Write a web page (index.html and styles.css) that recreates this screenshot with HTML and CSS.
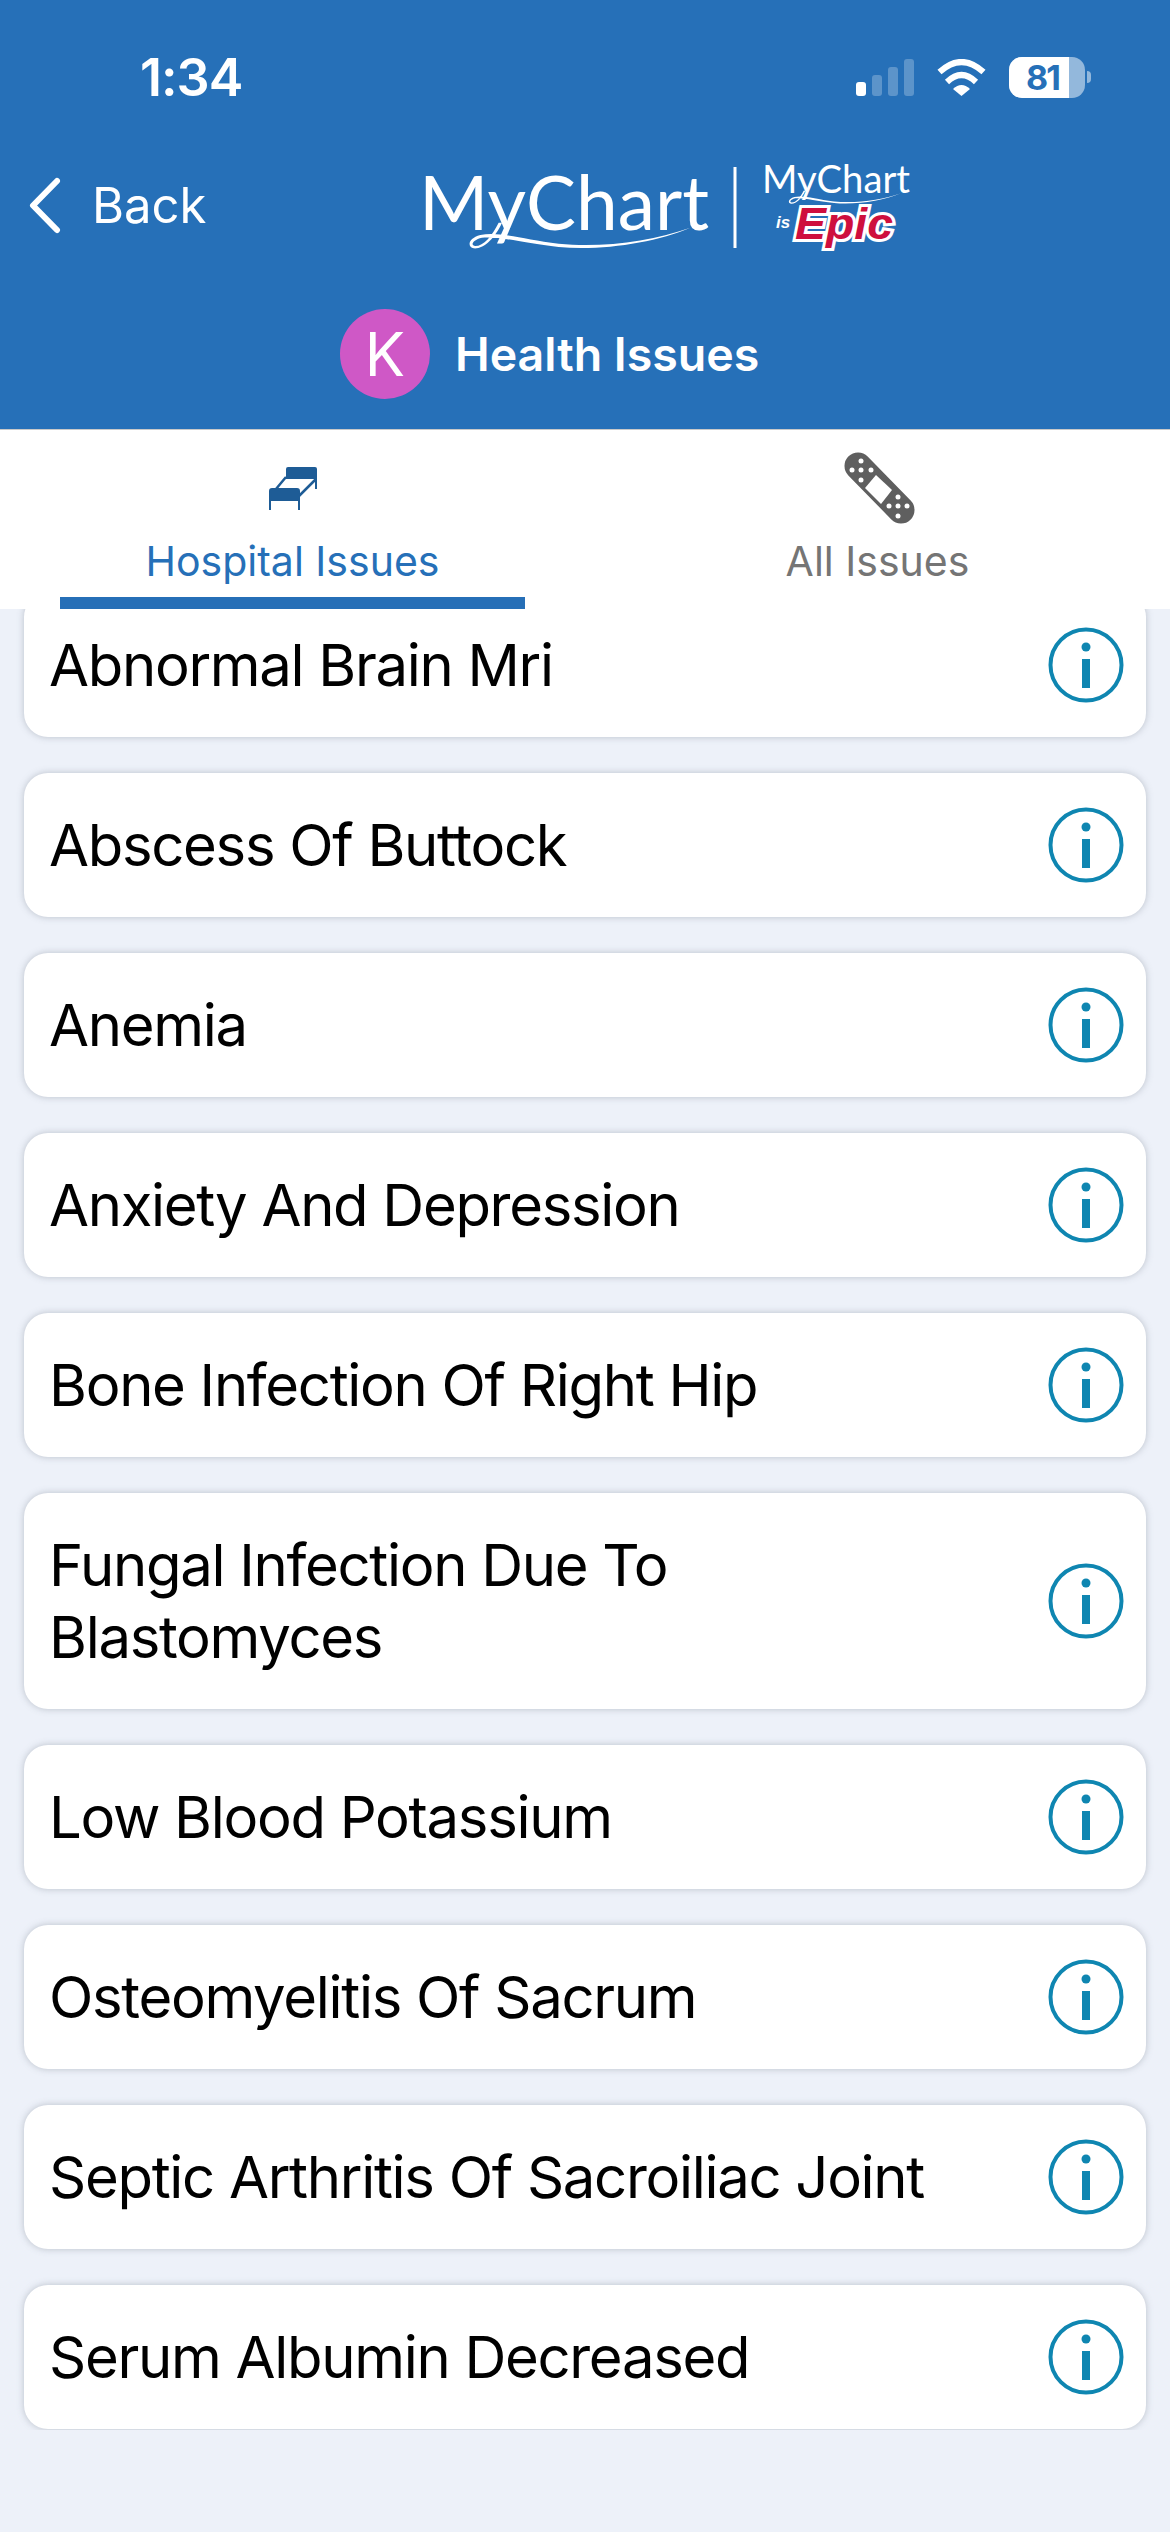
FILE: index.html
```html
<!DOCTYPE html>
<html lang="en">
<head>
    <meta charset="UTF-8">
    <meta name="viewport" content="width=device-width, initial-scale=1.0">
    <title>Health Issues</title>
    <link rel="stylesheet" href="styles.css">
</head>
<body>
    <!-- Header -->
    <header class="header">
        <div class="status-bar">
            <span class="status-time">1:34</span>
            <div class="status-icons">
                <svg width="58" height="37" viewBox="0 0 58 37">
                    <rect x="0" y="23" width="10" height="14" rx="3" fill="#fff"/>
                    <rect x="16" y="16" width="10" height="21" rx="3" fill="#fff" fill-opacity=".25"/>
                    <rect x="32" y="8" width="10" height="29" rx="3" fill="#fff" fill-opacity=".25"/>
                    <rect x="48" y="0" width="10" height="37" rx="3" fill="#fff" fill-opacity=".25"/>
                </svg>
                <svg width="51" height="37" viewBox="0 0 51 37">
                    <path d="M3.5 13Q25.5 -7 47.5 13" fill="none" stroke="#fff" stroke-width="6"/>
                    <path d="M11 23Q25.5 9 40 23" fill="none" stroke="#fff" stroke-width="6"/>
                    <path d="M17 30Q25.5 22 34 30L25.5 37Z" fill="#fff"/>
                </svg>
                <div class="battery">
                    <div class="battery-body"><div class="battery-fill">81</div></div>
                    <div class="battery-nub"></div>
                </div>
            </div>
        </div>
        <div class="nav-bar">
            <svg class="back-icon" width="33" height="57" viewBox="0 0 33 57">
                <path d="M29 4L5 28.5L29 53" fill="none" stroke="#fff" stroke-width="6" stroke-linecap="round" stroke-linejoin="round"/>
            </svg>
            <span class="back-label">Back</span>
            <svg class="logo" width="510" height="100" viewBox="-10 -5 510 100">
                <text class="logo-main" x="-3" y="69" textLength="290" lengthAdjust="spacingAndGlyphs">MyChart</text>
                <g transform="translate(-20 -20) scale(.3333)">
                    <path fill="#fff" d="M300 245C280 290 245 325 215 322C195 318 198 292 235 282C290 270 360 295 470 308C600 322 750 300 865 260C760 305 600 330 470 318C360 305 290 285 240 290C210 297 205 314 220 315C245 315 270 285 290 245Z"/>
                </g>
                <rect x="311.500" y="6" width="3" height="81" fill="#fff"/>
                <text class="logo-small" x="340" y="32" textLength="148" lengthAdjust="spacingAndGlyphs">MyChart</text>
                <g transform="translate(-20 -20) scale(.3333) translate(1058 25) scale(.507)">
                    <path fill="#fff" d="M300 245C280 290 245 325 215 322C195 318 198 292 235 282C290 270 360 295 470 308C600 322 750 300 865 260C760 305 600 330 470 318C360 305 290 285 240 290C210 297 205 314 220 315C245 315 270 285 290 245Z"/>
                </g>
                <text class="logo-is" x="354" y="67">is</text>
                <text class="logo-epic" x="373" y="78" textLength="98" lengthAdjust="spacingAndGlyphs">Epic</text>
            </svg>
        </div>
        <div class="title-row">
            <div class="avatar">K</div>
            <h1 class="title">Health Issues</h1>
        </div>
    </header>

    <!-- Onglets -->
    <nav class="tabs">
        <div class="tab tab-active">
            <div class="tab-icon">
                <svg width="48" height="43" viewBox="0 0 48 43">
                    <path fill="#1e5c96" d="M19 0H46Q48 0 48 2V22H46V12H17V2Q17 0 19 0Z"/>
                    <path fill="none" stroke="#1e5c96" stroke-width="2.500" d="M7 22L17 10M47 12L30 29"/>
                    <path fill="#1e5c96" d="M3 21H28Q31 21 31 24V43H29V34H2V43H0V24Q0 21 3 21Z"/>
                </svg>
            </div>
            <span class="tab-label">Hospital Issues</span>
        </div>
        <div class="tab">
            <div class="tab-icon tab-icon-right">
                <svg width="71" height="72" viewBox="0 0 71 72">
                    <path d="M14 14L57 58" stroke="#5f5f5f" stroke-width="27" stroke-linecap="round"/>
                    <path fill="#fff" d="M32 23L48 38L37 52L21 36Z"/>
                    <g fill="#fff">
                        <circle cx="17" cy="9" r="2.500"/><circle cx="8" cy="18" r="2.500"/><circle cx="17" cy="18" r="2.500"/><circle cx="27" cy="18" r="2.500"/><circle cx="17" cy="28" r="2.500"/>
                        <circle cx="54" cy="45" r="2.500"/><circle cx="45" cy="54" r="2.500"/><circle cx="54" cy="54" r="2.500"/><circle cx="63" cy="54" r="2.500"/><circle cx="54" cy="64" r="2.500"/>
                    </g>
                </svg>
            </div>
            <span class="tab-label">All Issues</span>
        </div>
    </nav>

    <!-- Liste -->
    <main class="list-area">
        <ul class="issue-list" id="issue-list"></ul>
    </main>

    <script>
        let issues = [
            'Abnormal Brain Mri',
            'Abscess Of Buttock',
            'Anemia',
            'Anxiety And Depression',
            'Bone Infection Of Right Hip',
            'Fungal Infection Due To Blastomyces',
            'Low Blood Potassium',
            'Osteomyelitis Of Sacrum',
            'Septic Arthritis Of Sacroiliac Joint',
            'Serum Albumin Decreased'
        ];
        let issueList = document.getElementById('issue-list');
        for (let i = 0; i < issues.length; i++) {
            let li = document.createElement('li');
            li.className = 'issue-card';
            li.innerHTML = '<span class="issue-name">' + issues[i] + '</span>' +
                '<svg width="76" height="76" viewBox="0 0 76 76">' +
                '<circle cx="38" cy="38" r="35.500" fill="none" stroke="#0f86b1" stroke-width="4"/>' +
                '<circle cx="38" cy="20" r="4.500" fill="#0f86b1"/>' +
                '<rect x="34" y="32" width="8" height="29" fill="#0f86b1"/>' +
                '</svg>';
            issueList.appendChild(li);
        }
    </script>
</body>
</html>
```

FILE: styles.css
```css
* {
    box-sizing: border-box;
}

html, body {
    margin: 0;
    padding: 0;
}

body {
    width: 1170px;
    height: 2532px;
    overflow: hidden;
    background-color: #edf1f9;
    font-family: Inter, "Liberation Sans", sans-serif;
    color: #000;
}

/* Header */
.header {
    height: 430px;
    background-color: #2670b8;
    border-bottom: 1px solid #c9c9c9;
    color: #fff;
}

.status-bar {
    height: 154px;
    padding: 0 79px 0 140px;
    display: flex;
    align-items: center;
    justify-content: space-between;
}

.status-time {
    font-size: 52px;
    font-weight: 600;
    letter-spacing: -1px;
}

.status-icons {
    display: flex;
    align-items: center;
    gap: 22px;
}

.battery {
    display: flex;
    align-items: center;
    gap: 2px;
}

.battery-body {
    width: 76px;
    height: 41px;
    border-radius: 13px;
    overflow: hidden;
    background-color: rgba(255, 255, 255, 0.5);
}

.battery-fill {
    width: 60px;
    height: 41px;
    padding-left: 17px;
    background-color: #fff;
    color: #2670b8;
    font-size: 34px;
    font-weight: 700;
    line-height: 41px;
    letter-spacing: -2px;
}

.battery-nub {
    width: 4px;
    height: 12px;
    border-radius: 0 6px 6px 0;
    background-color: rgba(255, 255, 255, 0.5);
}

.nav-bar {
    height: 102px;
    padding-left: 28px;
    display: flex;
    align-items: center;
}

.back-label {
    margin-left: 31px;
    width: 111px;
    font-size: 49px;
    font-weight: 400;
}

.logo {
    margin-left: 209px;
    margin-top: 2px;
}

.logo-main,
.logo-small {
    font-family: Lato, sans-serif;
    font-weight: 400;
    fill: #fff;
}

.logo-main {
    font-size: 76px;
}

.logo-small {
    font-size: 38px;
}

.logo-is {
    font-family: "Liberation Sans", sans-serif;
    font-size: 17px;
    font-style: italic;
    font-weight: 700;
    fill: #fff;
}

.logo-epic {
    font-family: "Liberation Sans", sans-serif;
    font-size: 45px;
    font-style: italic;
    font-weight: 700;
    fill: #ce0f3e;
    stroke: #fff;
    stroke-width: 6px;
    paint-order: stroke;
}

.title-row {
    padding: 53px 0 0 340px;
    display: flex;
    align-items: center;
    gap: 25px;
}

.avatar {
    width: 90px;
    height: 90px;
    border-radius: 50%;
    background-color: #cf58c6;
    font-size: 60px;
    font-weight: 400;
    line-height: 90px;
    text-align: center;
}

.title {
    margin: 0;
    font-size: 46.5px;
    font-weight: 600;
}

/* Onglets */
.tabs {
    height: 179px;
    padding: 0 60px;
    background-color: #fff;
    display: grid;
    grid-template-columns: 465px 465px;
    gap: 120px;
}

.tab {
    display: flex;
    flex-direction: column;
    align-items: center;
    border-bottom: 12px solid transparent;
}

.tab-active {
    border-bottom-color: #266fb7;
}

.tab-icon {
    height: 100px;
    padding-top: 16px;
    display: flex;
    align-items: center;
    justify-content: center;
}

.tab-icon-right {
    padding-left: 4px;
}

.tab-label {
    margin-top: 6px;
    font-size: 41px;
    line-height: 50px;
    color: #757575;
}

.tab-active .tab-label {
    color: #2670b8;
}

/* Liste */
.list-area {
    height: 1821px;
    overflow: hidden;
}

.issue-list {
    list-style: none;
    margin: -16px 0 0;
    padding: 0 24px;
    display: flex;
    flex-direction: column;
    gap: 36px;
}

.issue-card {
    padding: 0 22px 0 25px;
    background-color: #fff;
    border-radius: 24px;
    box-shadow: 0 0 7px rgba(90, 100, 115, 0.35);
    display: flex;
    align-items: center;
    justify-content: space-between;
}

.issue-name {
    max-width: 920px;
    padding: 36px 0;
    font-size: 58px;
    line-height: 72px;
    letter-spacing: -1.3px;
}
```
